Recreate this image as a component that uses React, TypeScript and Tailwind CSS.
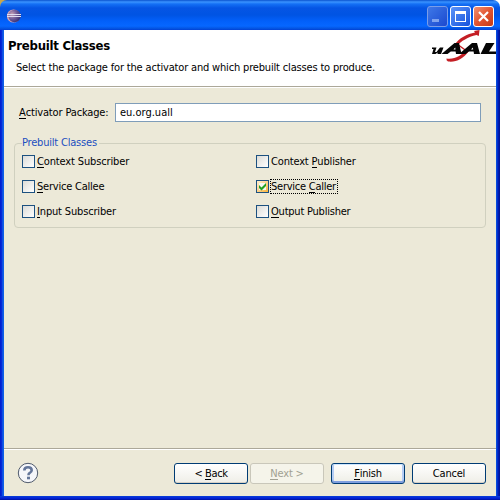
import React from "react";

const rowText = "whitespace-nowrap text-[11px] leading-[14px]";

function U({ children }: { children: React.ReactNode }) {
  return <span className="inline-block border-b border-current leading-[11px]">{children}</span>;
}

function EclipseIcon() {
  return (
    <svg width="16" height="16" viewBox="0 0 16 16" className="block">
      <defs>
        <radialGradient id="ecl" cx="0.3" cy="0.35" r="0.8">
          <stop offset="0" stopColor="#c9a3b4" />
          <stop offset="0.45" stopColor="#76629c" />
          <stop offset="1" stopColor="#28256c" />
        </radialGradient>
      </defs>
      <circle cx="7.500" cy="8" r="6.6" fill="#d3a3b4" />
      <circle cx="8.500" cy="8" r="6.2" fill="url(#ecl)" />
      <path d="M1 6.5h14M1 8.5h14" stroke="#dedcf0" strokeWidth="1" />
    </svg>
  );
}

function Logo() {
  return (
    <svg width="64" height="34" viewBox="432 30 64 34" className="block">
      <path d="M479.500 30L478.800 36L476.500 35C468 37 461 41 457 46L454.500 45C459 38 467 34 475 32.500L474 31z" fill="#c41e24" />
      <path d="M446.500 58.500C455 59.500 461 56 466 50L469 51C463 59 456 62.500 448 61.500Q446 60.500 446.500 58.500z" fill="#c41e24" />
      <path d="M457 44L468 52" stroke="#c41e24" strokeWidth="1.5" />
      <g fill="#050505">
        <path d="M432 47.500h4.500l-1.500 4.500h1.500l3.500-4.500h3.500l-2.500 6.500h-3.500l.2-1.500-2.200 1.500h-3.500l1.500-5h-1.500z" />
        <path fillRule="evenodd" d="M441.500 54L454.500 43h4.500l2.500 11h-5.500l-.4-2.500h-4.800L447.500 54zM453.500 49.500h2l-.3-2z" />
        <path fillRule="evenodd" d="M459 54L472 43h5l3 11h-6l-.4-2.500h-4.800L465.500 54zM471 49.500h2.200l-.3-2z" />
        <path d="M486 43h8.500l-5.500 8.500h7V54h-15.500z" />
      </g>
    </svg>
  );
}

function Check({ children, checked, spacing }: { children: React.ReactNode; checked?: boolean; spacing: string }) {
  return (
    <div className="flex h-[15px] items-center">
      <div
        className={`flex h-[13px] w-[13px] shrink-0 items-center justify-center border border-[#1c5180] ${
          checked ? "bg-linear-to-br from-[#fff0cf] to-[#f8b330]" : "bg-linear-to-br from-[#dcdcd7] to-white"
        }`}
      >
        {checked && (
          <svg width="11" height="11" viewBox="0 0 11 11" className="shrink-0">
            <rect x="2" y="2" width="7" height="7" fill="#f6f7f1" />
            <path d="M2 4v3l2.500 2.500L9 5V2L4.500 6.500z" fill="#21a121" />
          </svg>
        )}
      </div>
      <span
        className={`${rowText} ${spacing} ml-px flex h-[15px] items-center border ${
          checked ? "border-dotted border-black pr-px" : "border-transparent"
        }`}
      >
        <span>{children}</span>
      </span>
    </div>
  );
}

function Button({ children, kind, spacing }: { children: React.ReactNode; kind?: "off" | "main"; spacing: string }) {
  const look =
    kind === "off"
      ? "border-[#c9c7ba] bg-[#f5f4ea] text-[#a1a192]"
      : kind === "main"
        ? "border-[#003c74] bg-linear-to-b from-white to-[#eeeee6] shadow-[inset_0_1px_#cee7ff,inset_0_-2px_#7f9fdf,inset_2px_0_#b5cdf4,inset_-2px_0_#b5cdf4]"
        : "border-[#003c74] bg-linear-to-b from-white to-[#efeee7] shadow-[inset_0_-1px_#d6d0c5]";
  return (
    <button className={`flex h-[21px] w-[74px] items-center justify-center rounded-[3px] border pt-px ${look}`}>
      <span className={`${rowText} ${spacing}`}>{children}</span>
    </button>
  );
}

export default function App() {
  return (
    <div className="flex h-[500px] w-[500px] flex-col overflow-hidden bg-[linear-gradient(90deg,#c9a64a_0_50%,#ffffff_50%)] font-['DejaVu_Sans_Condensed','DejaVu_Sans',sans-serif] text-[11px] text-black [font-stretch:condensed]">
      <header className="flex h-[30px] shrink-0 items-center rounded-t-[7px] bg-[linear-gradient(#0a53cf_0,#3a93ff_2px,#1470f5_4px,#0555e4_8px,#0054e3_15px,#0260fa_21px,#0667ff_26px,#0350dc_29px,#003dd7_30px)] pl-[6px] pr-[6px] pt-[2px]">
        <EclipseIcon />
        <div className="ml-auto flex gap-[2px]">
          <div className="flex h-[21px] w-[21px] rounded-[3px] border border-[#7a9de8] bg-linear-to-br from-[#3f78e8] to-[#1c48cf]">
            <div className="ml-[4px] mt-[12px] h-[3px] w-[7px] bg-[#7ea2ee]" />
          </div>
          <div className="flex h-[21px] w-[21px] items-center justify-center rounded-[3px] border border-white bg-linear-to-br from-[#5c94f8] to-[#1550dc]">
            <div className="h-[11px] w-[11px] border border-t-[3px] border-white" />
          </div>
          <div className="flex h-[21px] w-[21px] items-center justify-center rounded-[3px] border border-white bg-linear-to-br from-[#f09070] via-[#e25430] to-[#c33a12]">
            <svg width="13" height="13" viewBox="0 0 13 13">
              <path d="M2 2l9 9M11 2l-9 9" stroke="white" strokeWidth="2.2" />
            </svg>
          </div>
        </div>
      </header>
      <div className="flex flex-1 flex-col bg-[linear-gradient(90deg,#0019cf_0,#0831d9_2px,#166aee_3px,#0855dd_4px,#0855dd_496px,#0441d8_497px,#001dc0_498px,#00138c_500px)] px-1">
        <div className="flex h-[57px] shrink-0 justify-between border-b border-[#aca899] bg-white">
          <div className="pl-[4px] pt-[8px]">
            <h1 className="whitespace-nowrap text-[13px] font-bold leading-[16px] tracking-[-0.25px]">Prebuilt Classes</h1>
            <p className={`${rowText} mt-[7px] pl-[8px] tracking-[-0.17px]`}>
              Select the package for the activator and which prebuilt classes to produce.
            </p>
          </div>
          <Logo />
        </div>
        <main className="flex flex-1 flex-col border-t border-white bg-[#ece9d8]">
          <label className="mt-[15px] flex items-center pl-[15px]">
            <span className={`${rowText} w-[96px] tracking-[-0.15px]`}>
              <U>A</U>ctivator Package:
            </span>
            <span className={`${rowText} flex h-[19px] w-[366px] items-center border border-[#7f9db9] bg-white pl-[4px]`}>
              eu.org.uall
            </span>
          </label>
          <fieldset className="ml-[10px] mt-[14px] h-[92px] w-[472px] rounded-[4px] border border-[#d0d0bf] pl-[7px]">
            <legend className={`${rowText} pr-[2px] tracking-[-0.2px] text-[#1c4fc0]`}>Prebuilt Classes</legend>
            <div className="grid grid-cols-[234px_200px] gap-y-[10px] pt-[4px]">
              <Check spacing="tracking-[-0.14px]"><U>C</U>ontext Subscriber</Check>
              <Check spacing="tracking-[-0.17px]">Context <U>P</U>ublisher</Check>
              <Check spacing="tracking-[-0.22px]"><U>S</U>ervice Callee</Check>
              <Check spacing="tracking-[-0.25px]" checked>Service <U>C</U>aller</Check>
              <Check spacing="tracking-[-0.16px]"><U>I</U>nput Subscriber</Check>
              <Check spacing="tracking-[-0.22px]"><U>O</U>utput Publisher</Check>
            </div>
          </fieldset>
        </main>
        <footer className="flex h-[47px] shrink-0 items-center border-t border-white bg-[#ece9d8] pl-[13px] pr-[10px] shadow-[0_-1px_#aca899]">
          <svg width="22" height="22" viewBox="0 0 22 22">
            <circle cx="11" cy="11" r="9.700" fill="#f5f6fa" stroke="#4f5a6c" strokeWidth="1" />
            <path d="M7.300 8.500Q7.300 5.300 11 5.300T14.700 8.300Q14.700 10 12.500 11.200Q11.500 11.800 11.500 13.200" fill="none" stroke="#64769a" strokeWidth="2.600" />
            <rect x="10" y="14.700" width="3" height="2.600" fill="#64769a" />
          </svg>
          <div className="ml-auto flex">
            <Button spacing="tracking-[-0.4px]">&lt; <U>B</U>ack</Button>
            <div className="ml-[2px]"><Button kind="off" spacing="tracking-[-0.2px]"><U>N</U>ext &gt;</Button></div>
            <div className="ml-[7px]"><Button kind="main" spacing="tracking-[-0.2px]"><U>F</U>inish</Button></div>
            <div className="ml-[7px]"><Button spacing="tracking-[-0.2px]">Cancel</Button></div>
          </div>
        </footer>
        <div className="-mx-1 h-[4px] shrink-0 bg-[linear-gradient(#0841d8,#0831d9_1px,#0019cf_3px,#00138c)]" />
      </div>
    </div>
  );
}
